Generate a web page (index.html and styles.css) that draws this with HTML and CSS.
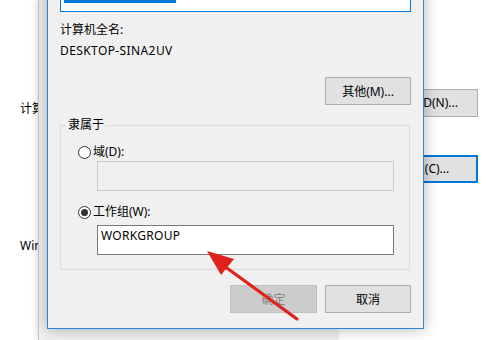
FILE: index.html
```html
<!DOCTYPE html>
<html lang="zh-CN">
<head>
  <meta charset="UTF-8">
  <title>计算机名/域更改</title>
  <link rel="stylesheet" href="styles.css">
</head>
<body>
  <div class="desktop">

    <!-- window furthest back: system properties -->
    <div class="sysprops">
      <div class="sp-row sp-row-id">
        <span class="sp-label">计算机描述:</span>
        <button class="sp-btn">网络 ID(N)...</button>
      </div>
      <div class="sp-row sp-row-change">
        <button class="sp-btn sp-btn-default">更改(C)...</button>
      </div>
      <div class="sp-row sp-row-act">
        <span class="sp-label">Windows 激活</span>
      </div>
    </div>

    <!-- middle window, only its left edge shows -->
    <div class="midwin"></div>

    <!-- the dialog in front -->
    <div class="dialog">
      <div class="name-box"><span class="sel"></span></div>
      <div class="caption">计算机全名:</div>
      <div class="fullname">DESKTOP-SINA2UV</div>
      <div class="more-row">
        <button class="btn">其他(M)...</button>
      </div>

      <div class="member">
        <span class="legend">隶属于</span>
        <label class="radio radio-domain"><span class="circle"></span>域(D):</label>
        <div class="field field-disabled"></div>
        <label class="radio radio-group"><span class="circle checked"></span>工作组(W):</label>
        <div class="field">WORKGROUP</div>
      </div>

      <div class="actions">
        <button class="btn btn-ok" disabled>确定</button>
        <button class="btn">取消</button>
      </div>
    </div>

    <!-- red annotation arrow -->
    <svg class="arrow" width="500" height="340" viewBox="0 0 500 340">
      <line x1="297" y1="319" x2="220" y2="263" stroke="#e0221d" stroke-width="3.2" stroke-linecap="round"/>
      <polygon points="207,251 221,275 234,259" fill="#e0221d"/>
    </svg>
  </div>
</body>
</html>
```

FILE: styles.css
```css
body {
  margin: 0;
  background: #ffffff;
  font-family: "Noto Sans", "Noto Sans CJK SC", sans-serif;
  font-size: 12px;
  color: #000;
  overflow: hidden;
}
.desktop {
  position: relative;
  width: 500px;
  height: 340px;
  overflow: hidden;
}

/* system properties window (background) */
.sysprops {
  position: absolute;
  left: 0;
  top: 0;
  width: 480px;
  height: 340px;
  background: #ffffff;
  padding: 0 2px 0 20px;
  box-sizing: border-box;
  display: flex;
  flex-direction: column;
}
.sp-row {
  display: flex;
  justify-content: space-between;
  align-items: flex-end;
  line-height: 16px;
}
.sp-row-id { margin-top: 89px; height: 28px; }
.sp-row-change { margin-top: 38px; height: 28px; justify-content: flex-end; }
.sp-row-act { margin-top: 55px; }
.sp-btn {
  width: 106px;
  height: 28px;
  background: #e1e1e1;
  border: 1px solid #adadad;
  font: inherit;
  color: #000;
  padding: 0;
}
.sp-btn-default { border: 2px solid #0078d7; }

/* middle window edge */
.midwin {
  position: absolute;
  left: 38px;
  top: 0;
  width: 300px;
  height: 340px;
  background: #f0f0f0;
  border-left: 1px solid #c4c4c4;
  box-shadow: -3px 0 5px rgba(0, 0, 0, 0.08);
}

/* dialog */
.dialog {
  position: absolute;
  left: 47px;
  top: -30px;
  width: 377px;
  height: 359px;
  box-sizing: border-box;
  background: #f0f0f0;
  border: 1px solid #2a86d8;
  padding: 17px 12px 0 12px;
  box-shadow: 0 0 14px rgba(0, 0, 0, 0.3);
}
.name-box {
  height: 24px;
  box-sizing: border-box;
  border: 1px solid #0078d7;
  background: #fff;
  padding: 0 3px;
}
.sel {
  display: block;
  width: 112px;
  height: 14px;
  background: #0078d7;
}
.caption { margin-top: 10px; line-height: 16px; }
.fullname { margin-top: 5px; line-height: 16px; letter-spacing: 0.4px; }
.more-row {
  margin-top: 18px;
  display: flex;
  justify-content: flex-end;
}
.btn {
  width: 86px;
  height: 28px;
  background: #e1e1e1;
  border: 1px solid #adadad;
  font: inherit;
  color: #000;
  padding: 0;
}
.btn-ok {
  width: 87px;
  background: #cccccc;
  border-color: #bfbfbf;
  color: #838383;
}

/* group box */
.member {
  margin-top: 20px;
  width: 350px;
  box-sizing: border-box;
  border: 1px solid #dcdcdc;
  padding: 0 15px 14px 17px;
}
.legend {
  display: table;
  margin: -9px 0 0 -12px;
  padding: 0 2px;
  line-height: 16px;
  background: #f0f0f0;
}
.radio {
  display: flex;
  align-items: center;
  height: 16px;
  line-height: 16px;
}
.radio-domain { margin-top: 11px; }
.radio-group { margin-top: 13px; }
.circle {
  width: 13px;
  height: 13px;
  box-sizing: border-box;
  border: 1px solid #333;
  border-radius: 50%;
  background: #fff;
  margin-right: 2px;
  display: flex;
  align-items: center;
  justify-content: center;
}
.circle.checked::after {
  content: "";
  width: 7px;
  height: 7px;
  border-radius: 50%;
  background: #333;
}
.field {
  width: 297px;
  height: 30px;
  margin-left: 19px;
  margin-top: 5px;
  box-sizing: border-box;
  border: 1px solid #7a7a7a;
  background: #fff;
  padding: 2px 3px 0;
  line-height: 16px;
  letter-spacing: 0.3px;
}
.field-disabled {
  margin-top: 1px;
  border-color: #cccccc;
  background: #f0f0f0;
}

.actions {
  margin-top: 15px;
  display: flex;
  justify-content: flex-end;
  gap: 8px;
}

.arrow {
  position: absolute;
  left: 0;
  top: 0;
}
```
